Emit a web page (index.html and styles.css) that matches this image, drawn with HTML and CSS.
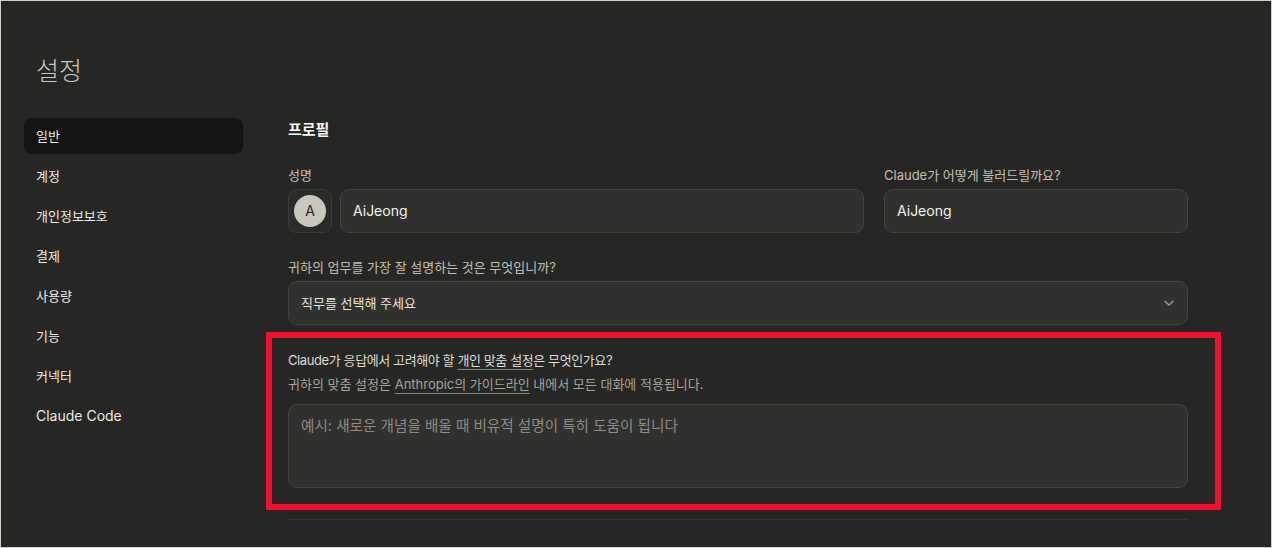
FILE: index.html
```html
<!DOCTYPE html>
<html lang="ko">
<head>
  <meta charset="UTF-8" />
  <meta name="viewport" content="width=device-width, initial-scale=1.0" />
  <title>설정</title>
  <link rel="stylesheet" href="styles.css">
</head>
<body>
  <div class="page">
    <h1 class="page-title">설정</h1>

    <div class="layout">
      <!-- Sidebar navigation -->
      <nav class="sidebar">
        <a class="nav-item active">일반</a>
        <a class="nav-item">계정</a>
        <a class="nav-item">개인정보보호</a>
        <a class="nav-item">결제</a>
        <a class="nav-item">사용량</a>
        <a class="nav-item">기능</a>
        <a class="nav-item">커넥터</a>
        <a class="nav-item latin">Claude Code</a>
      </nav>

      <!-- Profile settings -->
      <main class="content">
        <h2 class="section-title">프로필</h2>

        <div class="name-row">
          <div class="field">
            <label class="field-label">성명</label>
            <div class="name-inputs">
              <div class="avatar-box"><span class="avatar">A</span></div>
              <div class="input">AiJeong</div>
            </div>
          </div>
          <div class="field">
            <label class="field-label">Claude가 어떻게 불러드릴까요?</label>
            <div class="input">AiJeong</div>
          </div>
        </div>

        <div class="field group">
          <label class="field-label">귀하의 업무를 가장 잘 설명하는 것은 무엇입니까?</label>
          <div class="input select">
            <span>직무를 선택해 주세요</span>
            <svg class="chevron" width="12" height="12" viewBox="0 0 12 12" fill="none">
              <path d="M2 4.2 L6 8 L10 4.2" stroke="#a3a199" stroke-width="1.3" stroke-linecap="round" stroke-linejoin="round"/>
            </svg>
          </div>
        </div>

        <div class="highlight">
          <p class="pref-title">Claude가 응답에서 고려해야 할 <span class="link">개인 맞춤 설정</span>은 무엇인가요?</p>
          <p class="pref-sub">귀하의 맞춤 설정은 <span class="link">Anthropic의 가이드라인</span> 내에서 모든 대화에 적용됩니다.</p>
          <div class="textarea">예시: 새로운 개념을 배울 때 비유적 설명이 특히 도움이 됩니다</div>
        </div>

        <hr class="divider">
      </main>
    </div>
  </div>
</body>
</html>
```

FILE: styles.css
```css
* {
  box-sizing: border-box;
}

html, body {
  margin: 0;
  height: 100%;
}

body {
  background-color: #262624;
  font-family: "Inter", "Noto Sans CJK KR", sans-serif;
  color: #f5f4ef;
  overflow: hidden;
}

.page {
  height: 100%;
  border: 1px solid #cfcfcc;
  padding: 0 23px;
}

.page-title {
  margin: 0;
  padding: 51px 0 0 12px;
  height: 117px;
  font-family: "Noto Sans CJK KR", serif;
  font-weight: 300;
  font-size: 25px;
  line-height: 34px;
  color: #c9c6bd;
}

.layout {
  display: grid;
  grid-template-columns: 219px 900px;
  column-gap: 45px;
}

/* Sidebar */
.sidebar {
  display: flex;
  flex-direction: column;
  gap: 4px;
}

.nav-item {
  display: block;
  height: 36px;
  padding: 0 12px;
  border-radius: 8px;
  font-size: 13px;
  line-height: 36px;
  color: #ecebe5;
}

.nav-item.latin {
  font-size: 14px;
}

.nav-item.active {
  background-color: #141413;
}

/* Content */
.section-title {
  margin: 0 0 23px;
  font-size: 15px;
  font-weight: 700;
  line-height: 24px;
  color: #faf9f5;
}

.name-row {
  display: grid;
  grid-template-columns: 576px 304px;
  column-gap: 20px;
}

.field-label {
  display: block;
  margin-bottom: 4px;
  font-size: 13px;
  line-height: 20px;
  color: #c2c0b6;
}

.group {
  margin-top: 24px;
}

.name-inputs {
  display: flex;
  gap: 8px;
}

.avatar-box {
  flex: 0 0 44px;
  height: 44px;
  border: 1px solid #3b3b38;
  border-radius: 9px;
  background-color: #2b2b29;
  display: flex;
  align-items: center;
  justify-content: center;
}

.avatar {
  width: 32px;
  height: 32px;
  border-radius: 50%;
  background-color: #c9c6bd;
  color: #1f1e1d;
  font-size: 14px;
  line-height: 32px;
  text-align: center;
}

.input {
  flex: 1;
  height: 44px;
  padding: 0 12px;
  background-color: #30302e;
  border: 1px solid #42423f;
  border-radius: 9px;
  font-size: 14px;
  line-height: 42px;
  color: #f2f1ec;
}

.select {
  display: flex;
  align-items: center;
  justify-content: space-between;
  padding-right: 12px;
  font-size: 13px;
  color: #e8e6df;
}

.chevron {
  display: block;
}

/* Highlighted personal preferences block */
.highlight {
  margin: 7px -33px 0 -22px;
  padding: 12px 27px 16px 16px;
  border: 6px solid #f2102a;
}

.pref-title {
  margin: 0;
  font-size: 13px;
  letter-spacing: -0.4px;
  line-height: 20px;
  color: #dedcd4;
}

.pref-sub {
  margin: 4px 0 10px;
  font-size: 13px;
  line-height: 20px;
  color: #a6a49b;
}

.link {
  text-decoration: underline;
  text-decoration-color: #8a8882;
  text-underline-offset: 4px;
}

.textarea {
  height: 84px;
  padding: 10px 12px;
  background-color: #30302e;
  border: 1px solid #42423f;
  border-radius: 9px;
  font-size: 14.6px;
  line-height: 22px;
  color: #8e8c85;
}

.divider {
  margin: 9px 0 0;
  border: none;
  border-top: 1px solid #343432;
}
```
